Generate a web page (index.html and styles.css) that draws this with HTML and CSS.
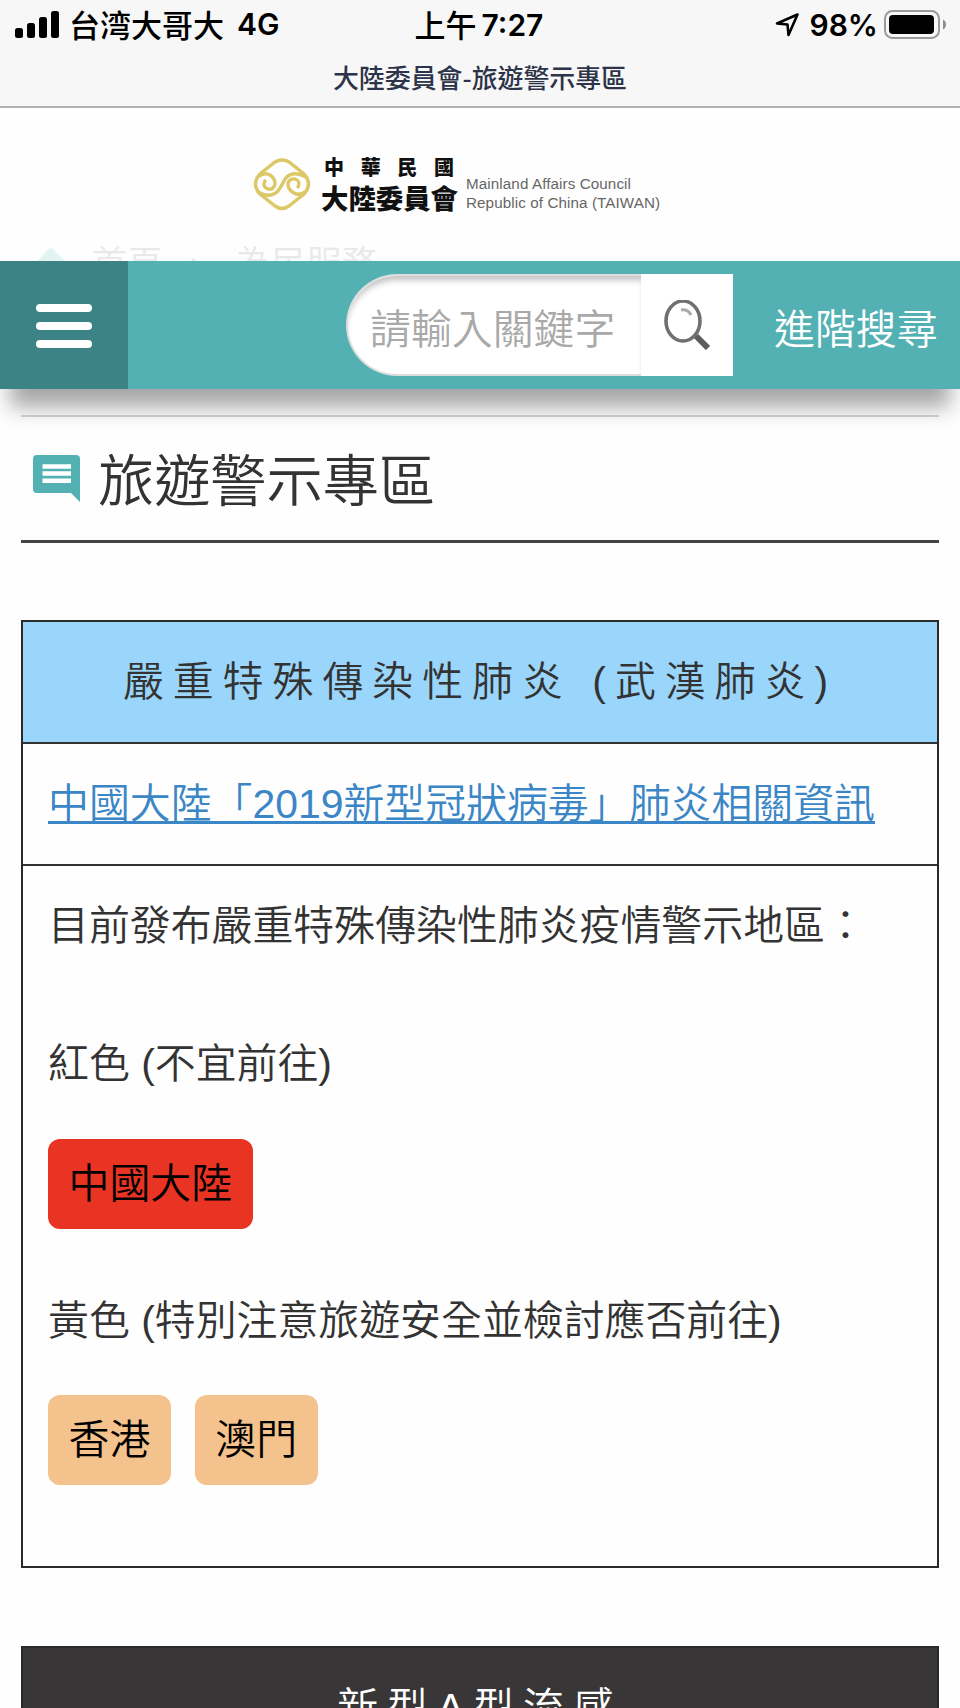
FILE: index.html
```html
<!DOCTYPE html>
<html lang="zh-Hant">
<head>
  <meta charset="UTF-8" />
  <meta name="viewport" content="width=device-width, initial-scale=1.0" />
  <title>大陸委員會-旅遊警示專區</title>
  <link rel="stylesheet" href="styles.css">
</head>
<body>
  <div class="phone-bar">
    <div class="status">
      <div class="status-left">
        <svg class="signal" width="45" height="28" viewBox="0 0 45 28">
          <rect x="0" y="17" width="8" height="10" rx="2.5"/>
          <rect x="12" y="12" width="8" height="15" rx="2.5"/>
          <rect x="24" y="6" width="8" height="21" rx="2.5"/>
          <rect x="36" y="0" width="8" height="27" rx="2.5"/>
        </svg>
        <span class="carrier">台湾大哥大</span>
        <span class="num">4G</span>
      </div>
      <div class="status-time"><span>上午</span><span class="num">7:27</span></div>
      <div class="status-right">
        <svg width="24" height="24" viewBox="0 0 24 24">
          <path d="M2 10.5 L22.5 1.5 L13.5 22 L12.5 11.5 Z" fill="none" stroke="#000" stroke-width="2.6" stroke-linejoin="round"/>
        </svg>
        <span class="num">98%</span>
        <svg class="battery" width="63" height="30" viewBox="0 0 63 30">
          <rect x="1" y="1" width="54" height="27" rx="7.5" fill="none" stroke="#9a9a9a" stroke-width="2"/>
          <rect x="5" y="5" width="45" height="19" rx="4" fill="#000"/>
          <path d="M59 9.5 Q62 11 62 14.5 Q62 18 59 19.5 Z" fill="#8f8f8f"/>
        </svg>
      </div>
    </div>
    <div class="page-name">大陸委員會-旅遊警示專區</div>
  </div>

  <header>
    <div class="logo">
      <svg width="58" height="54" viewBox="0 0 58 54" fill="none" stroke="#dcc867" stroke-width="3.4" stroke-linecap="round">
        <path d="M22 4 Q29 0 36 4 L51 16 Q60 26 51 36 L36 48 Q29 53 22 48 L7 36 Q-2 26 7 16 Z"/>
        <path d="M6 18 Q12 14 17 17 Q22 20 22 26 Q21 32 15 31 Q9 29 12 23"/>
        <path d="M52 34 Q46 38 41 35 Q35 32 35 26 Q36 20 42 21 Q48 23 45 29"/>
        <path d="M5 34 Q17 41 25 33 Q28 29 31 23 Q37 11 53 19"/>
      </svg>
      <div class="logo-zh">
        <div class="zh-top"><span>中</span><span>華</span><span>民</span><span>國</span></div>
        <div class="zh-name">大陸委員會</div>
      </div>
      <div class="logo-en">Mainland Affairs Council<br>Republic of China (TAIWAN)</div>
    </div>
    <div class="crumbs">
      <svg width="28" height="28" viewBox="0 0 28 28"><path d="M14 0 L28 14 H24 V28 H4 V14 H0 Z" fill="#e2f4f2"/></svg>
      <span class="crumb-home">首頁</span><span class="crumb-sep">、</span><span>為民服務</span>
    </div>
  </header>

  <nav class="toolbar">
    <button class="menu" aria-label="選單"><i></i><i></i><i></i></button>
    <form class="search">
      <input type="text" placeholder="請輸入關鍵字">
      <button type="button" aria-label="搜尋">
        <svg width="50" height="50" viewBox="0 0 50 50" fill="none">
          <path d="M34 36 L46 48" stroke="#5c5c5c" stroke-width="6"/>
          <ellipse cx="21" cy="21" rx="17" ry="20" stroke="#707070" stroke-width="3.6"/>
          <path d="M19 10 Q26 9 29 15" stroke="#aaa" stroke-width="3"/>
        </svg>
      </button>
    </form>
    <a class="advanced" href="#">進階搜尋</a>
  </nav>

  <main>
    <h1>
      <svg width="47" height="47" viewBox="0 0 47 47">
        <path d="M4 0 H43 Q47 0 47 4 V47 L38 38 H4 Q0 38 0 34 V4 Q0 0 4 0 Z" fill="#53b1b3"/>
        <path d="M9.500 11.500 H38 M9.500 18.500 H38 M9.500 25.700 H38" stroke="#fff" stroke-width="4.600"/>
      </svg>
      <span>旅遊警示專區</span>
    </h1>

    <section class="card">
      <h2>嚴重特殊傳染性肺炎 (武漢肺炎)</h2>
      <div class="card-link"><a href="#">中國大陸「2019新型冠狀病毒」肺炎相關資訊</a></div>
      <div class="card-body">
        <p>目前發布嚴重特殊傳染性肺炎疫情警示地區：</p>
        <p class="level">紅色 (不宜前往)</p>
        <div class="tags"><span class="tag red">中國大陸</span></div>
        <p class="level-next">黃色 (特別注意旅遊安全並檢討應否前往)</p>
        <div class="tags"><span class="tag yellow">香港</span><span class="tag yellow">澳門</span></div>
      </div>
    </section>

    <section class="card dark">
      <h2>新型A型流感</h2>
    </section>
  </main>
</body>
</html>
```
FILE: styles.css
```css
* {
  box-sizing: border-box;
}
body {
  margin: 0;
  height: 1708px;
  overflow: hidden;
  background: #fefefe;
  color: #333;
  font-family: "Liberation Sans", "Noto Sans CJK TC", sans-serif;
  font-size: 40.9px;
  font-weight: 350;
}
svg {
  display: block;
  flex: none;
}

/* phone status */
.phone-bar {
  height: 108px;
  background: #f7f7f7;
  border-bottom: 2px solid #b0b0b0;
  color: #000;
}
.status {
  display: grid;
  grid-template-columns: 1fr auto 1fr;
  align-items: center;
  height: 50px;
  padding: 0 13px 0 15px;
  font-family: "Noto Sans CJK TC", sans-serif;
  font-size: 31px;
  font-weight: 500;
  line-height: 48px;
}
.status-left, .status-right, .status-time {
  display: flex;
  align-items: center;
}
.status-time {
  margin-left: -4px;
}
.status-right {
  justify-content: flex-end;
}
.status-left > span, .status-time > span:first-child {
  margin-top: -2px;
}
.carrier {
  margin: 0 13px 0 9px;
}
.status-time .num {
  margin-left: 5px;
}
.status-right .num {
  margin: 0 6px 0 10px;
}
.num {
  font-family: Inter, sans-serif;
  font-size: 30px;
  font-weight: 600;
}
.page-name {
  text-align: center;
  font-family: "Noto Sans CJK TC", sans-serif;
  font-size: 25.9px;
  font-weight: 500;
  line-height: 54px;
  color: #2d3348;
}

/* logo header */
header {
  height: 153px;
  overflow: hidden;
  padding-top: 44px;
}
.logo {
  display: flex;
  height: 66px;
  padding-left: 253px;
}
.logo > svg {
  margin-top: 6px;
}
.logo-zh {
  width: 138px;
  margin-left: 10px;
  color: #111;
  font-family: "Noto Sans CJK TC", sans-serif;
  font-weight: 900;
}
.zh-top {
  display: flex;
  justify-content: space-between;
  padding: 0 5px 0 3px;
  font-size: 20px;
  line-height: 30px;
}
.zh-name {
  font-size: 27.4px;
  line-height: 31px;
}
.logo-en {
  margin: 22px 0 0 7px;
  color: #666;
  font-size: 15.2px;
  line-height: 19px;
  letter-spacing: 0.1px;
  white-space: nowrap;
}
.crumbs {
  display: flex;
  padding: 28px 0 0 37px;
  color: #e9e9e9;
  font-size: 35.3px;
  line-height: 36px;
}
.crumbs svg {
  margin-top: 1px;
}
.crumb-home {
  margin-left: 27px;
}
.crumb-sep {
  margin: 0 22px 0 16px;
}

/* toolbar */
.toolbar {
  display: flex;
  align-items: center;
  height: 128px;
  background: #53b1b3;
  box-shadow: 0 28px 20px -10px rgba(0, 0, 0, 0.35);
}
.menu {
  display: flex;
  flex-direction: column;
  align-items: center;
  justify-content: center;
  gap: 10px;
  width: 128px;
  height: 128px;
  border: 0;
  padding: 2px 0 0;
  background: #3b8385;
}
.menu i {
  width: 56px;
  height: 8px;
  border-radius: 4px;
  background: #fff;
}
.search {
  display: flex;
  height: 102px;
  margin-left: 218px;
}
.search input {
  width: 295px;
  border: 2px solid #ddd;
  border-right: 0;
  border-radius: 51px 0 0 51px;
  padding: 10px 0 0 22px;
  background: #fff;
  box-shadow: inset 0 7px 6px -3px rgba(0, 0, 0, 0.25);
  font: inherit;
}
.search input::placeholder {
  color: #a9a9a9;
}
.search button {
  width: 92px;
  border: 0;
  padding: 0 0 0 21px;
  background: #fff;
}
.advanced {
  margin: 2px 0 0 41px;
  color: #fff;
  text-decoration: none;
}

/* content */
main {
  margin: 26px 21px 0;
  border-top: 2px solid rgba(0, 0, 0, 0.16);
}
h1 {
  display: flex;
  align-items: center;
  gap: 18px;
  height: 126px;
  margin: 0 0 77px;
  border-bottom: 3px solid #444;
  padding-left: 12px;
  font-size: 56.2px;
  font-weight: 350;
}
h1 svg {
  margin-top: -1px;
}
h1 span {
  margin-top: -5px;
}
.card {
  height: 948px;
  margin-bottom: 78px;
  border: 2px solid #2a2a2a;
}
h2 {
  height: 122px;
  margin: 0;
  border-bottom: 2px solid #333;
  background: #9ad6fb;
  font-size: 40.9px;
  font-weight: 350;
  line-height: 120px;
  letter-spacing: 9px;
  text-align: center;
}
.card-link {
  height: 122px;
  border-bottom: 2px solid #333;
  padding-left: 25px;
  line-height: 120px;
}
.card-link a {
  color: #3b86c6;
  text-underline-offset: 3px;
  text-decoration-thickness: 3px;
  text-decoration-skip-ink: none;
}
.card-body {
  padding: 25px 25px 0;
}
.card-body p {
  margin: 0;
  line-height: 70px;
  white-space: nowrap;
}
.card-body .level {
  margin-top: 68px;
}
.card-body .level-next {
  margin-top: 57px;
}
.tags {
  display: flex;
  gap: 24px;
  margin-top: 40px;
}
.tag {
  height: 90px;
  border-radius: 12px;
  padding: 0 20.500px;
  color: #000;
  line-height: 90px;
}
.level-next + .tags {
  margin-top: 39px;
}
.red {
  background: #e93323;
}
.yellow {
  background: #f4c28c;
}
.dark h2 {
  background: #383637;
  color: #fff;
}
```
